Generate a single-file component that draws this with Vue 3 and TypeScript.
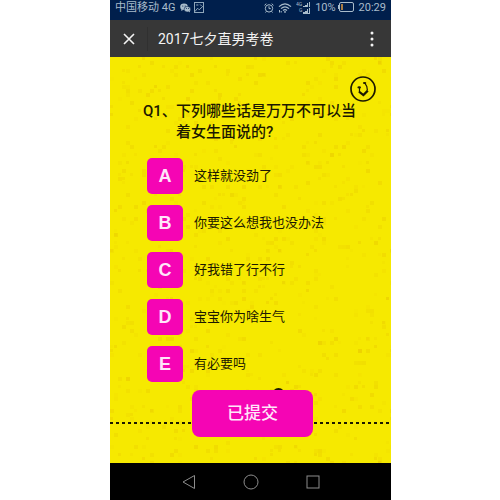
<script setup lang="ts">
import { ref } from 'vue'

interface Option {
  key: string
  text: string
}

interface Speck {
  x: number
  y: number
  size: number
  opacity: number
}

const options: Option[] = [
  { key: 'A', text: '这样就没劲了' },
  { key: 'B', text: '你要这么想我也没办法' },
  { key: 'C', text: '好我错了行不行' },
  { key: 'D', text: '宝宝你为啥生气' },
  { key: 'E', text: '有必要吗' },
]

const selected = ref('')

// Deterministic scatter of faint squares for the paper texture.
function makeSpecks(count: number): Speck[] {
  let seed = 77
  const next = (): number => {
    seed = (seed * 16807) % 2147483647
    return seed / 2147483647
  }
  return Array.from({ length: count }, () => ({
    x: Math.floor(next() * 70) * 4,
    y: Math.floor(next() * 100) * 4,
    size: next() > 0.3 ? 4 : 3,
    opacity: 0.04 + next() * 0.16,
  }))
}

const specks = makeSpecks(750)
</script>

<template>
  <div class="stage">
    <div class="phone">
      <div class="status">
        <span class="carrier">中国移动 4G</span>
        <svg class="wechat" width="11" height="10" viewBox="0 0 11 10" aria-hidden="true">
          <ellipse cx="4" cy="3.8" rx="3.8" ry="3.2" fill="#a9bccb" />
          <path d="M1.5 6 L1.2 8 L3.4 6.8Z" fill="#a9bccb" />
          <ellipse cx="7.4" cy="6.2" rx="3.3" ry="2.8" fill="#a9bccb" stroke="#001f4c" stroke-width=".6" />
          <path d="M8.5 8.3 L10 9.6 L9.8 7.6Z" fill="#a9bccb" />
          <g fill="#001f4c">
            <circle cx="2.8" cy="3" r=".6" /><circle cx="5.2" cy="3" r=".6" />
            <circle cx="6.4" cy="5.6" r=".5" /><circle cx="8.6" cy="5.6" r=".5" />
          </g>
        </svg>
        <svg class="photo" width="10" height="11" viewBox="0 0 10 11" fill="none" stroke="#8fa6ba" aria-hidden="true">
          <rect x=".5" y=".5" width="9" height="10" />
          <path d="M1 9.5 L3.6 6.2 L5.2 7.8 L9 4.2 M2.2 3 H4.4 M6 2.4 L7.6 4" />
        </svg>
        <span class="spacer"></span>
        <svg class="alarm" width="10" height="10" viewBox="0 0 10 10" fill="none" stroke="#a9bccb" aria-hidden="true">
          <circle cx="5" cy="5.4" r="3.7" />
          <path d="M.5 2.3 L2.3 .7 M9.5 2.3 L7.7 .7 M5 3.3 V5.6 H6.8 M2.4 8.4 L1.5 9.5 M7.6 8.4 L8.5 9.5" />
        </svg>
        <svg class="wifi" width="14" height="10" viewBox="0 0 14 10" fill="none" stroke="#a9bccb" stroke-width="1.2" aria-hidden="true">
          <path d="M1 3.6 Q7 -1.8 13 3.6 M3 5.6 Q7 2 11 5.6 M5 7.5 Q7 5.8 9 7.5" />
          <circle cx="7" cy="8.9" r=".9" fill="#a9bccb" stroke="none" />
          <path d="M1.5 7 V9.5 M3.2 8 V9.5" stroke-width="1" />
        </svg>
        <svg class="signal" width="15" height="13" viewBox="0 0 15 13" aria-hidden="true">
          <text x="0" y="5" class="tiny">4G</text>
          <text x="3" y="11" class="tiny">G</text>
          <g fill="#a9bccb">
            <path d="M7 5h2v1H7z M9 4h2v2H9z M11 2h1v4h-1z M13 1h1v5h-1z" />
            <path d="M7 11h2v1H7z M9 10h2v2H9z M11 8h1v4h-1z M13 7h1v5h-1z M7 12h7v1H7z" />
          </g>
        </svg>
        <span class="level">10%</span>
        <svg class="battery" width="17" height="11" viewBox="0 0 17 11" aria-hidden="true">
          <rect x="1.5" y=".5" width="14" height="9" rx="1.5" fill="none" stroke="#a9bccb" />
          <rect x="0" y="3" width="1.5" height="4" fill="#a9bccb" />
          <rect x="3" y="2" width="2" height="6" fill="#a77b42" />
        </svg>
        <span class="clock">20:29</span>
      </div>

      <header class="titlebar">
        <button class="close" type="button" aria-label="关闭">
          <svg width="12" height="12" viewBox="0 0 12 12"><path d="M1 1 L11 11 M11 1 L1 11" stroke="#f4f4f4" stroke-width="1.6" /></svg>
        </button>
        <h1>2017七夕直男考卷</h1>
        <button class="more" type="button" aria-label="更多">
          <svg width="4" height="16" viewBox="0 0 4 16" fill="#f4f4f4">
            <circle cx="2" cy="2" r="1.5" /><circle cx="2" cy="8" r="1.5" /><circle cx="2" cy="14" r="1.5" />
          </svg>
        </button>
      </header>

      <main class="paper">
        <svg class="texture" width="100%" height="100%" aria-hidden="true">
          <defs>
            <pattern id="specks" width="280" height="400" patternUnits="userSpaceOnUse">
              <rect v-for="(s, i) in specks" :key="i" :x="s.x" :y="s.y" :width="s.size" :height="s.size" fill="#dba800" :opacity="s.opacity" />
            </pattern>
          </defs>
          <rect width="100%" height="100%" fill="url(#specks)" />
        </svg>

        <button class="music" type="button" aria-label="音乐">
          <svg width="26" height="26" viewBox="0 0 26 26" fill="none" stroke="#1c1900">
            <circle cx="13" cy="13" r="12" stroke-width="1.7" />
            <path d="M9.6 11.4 L9.4 16 M14.8 7 L16.8 10.4 L17.4 14.4" stroke-width="1.2" />
            <path d="M9 15.6 L13.4 19 L17.8 14.6" stroke-width="2.2" />
            <ellipse cx="9.2" cy="11.4" rx="1.8" ry="1.1" fill="#1c1900" stroke="none" />
            <ellipse cx="14.6" cy="7" rx="1.7" ry="1.1" fill="#1c1900" stroke="none" />
          </svg>
        </button>

        <h2 class="question">
          <span class="number">Q1、</span>
          <span>下列哪些话是万万不可以当<br />着女生面说的?</span>
        </h2>

        <ul class="options">
          <li v-for="option in options" :key="option.key">
            <button class="option" type="button" :aria-pressed="selected === option.key" @click="selected = option.key">
              <span class="badge">{{ option.key }}</span>
              <span>{{ option.text }}</span>
            </button>
          </li>
        </ul>

        <div class="footer">
          <span class="knob"></span>
          <span class="cutline"></span>
          <button class="submit" type="button">已提交</button>
        </div>
      </main>

      <nav class="keys">
        <button type="button" aria-label="返回">
          <svg width="16" height="16" viewBox="0 0 16 16"><path d="M13.5 1.5 V14.5 L2 8Z" /></svg>
        </button>
        <button type="button" aria-label="主页">
          <svg width="16" height="16" viewBox="0 0 16 16"><circle cx="8" cy="8" r="7" /></svg>
        </button>
        <button type="button" aria-label="最近任务">
          <svg width="16" height="16" viewBox="0 0 16 16"><rect x="2" y="2" width="12" height="12" /></svg>
        </button>
      </nav>
    </div>
  </div>
</template>

<style>
body {
  background: #fff;
}
</style>

<style scoped>
.stage {
  display: flex;
  justify-content: center;
  min-height: 100vh;
  padding-left: 1px;
  font-family: Roboto, "Noto Sans CJK SC", sans-serif;
}

button {
  margin: 0;
  padding: 0;
  border: 0;
  background: none;
  color: inherit;
  font: inherit;
  cursor: pointer;
}

svg {
  display: block;
  flex: none;
}

.phone {
  display: flex;
  flex-direction: column;
  width: 100%;
  max-width: 281px;
  background: #000;
}

.status {
  display: flex;
  align-items: center;
  height: 20px;
  padding: 0 5px 5px;
  box-sizing: border-box;
  background: #001f4c;
  color: #a9bccb;
  font-size: 11px;
  line-height: 14px;
  white-space: nowrap;
}

.wechat {
  margin-left: 5px;
}

.photo {
  margin-left: 3px;
}

.spacer {
  flex: 1;
}

.wifi,
.signal,
.level,
.clock {
  margin-left: 4px;
}

.battery {
  margin-left: 2px;
}

.tiny {
  fill: #a9bccb;
  font-size: 5px;
}

.titlebar {
  display: flex;
  align-items: center;
  height: 37px;
  background: #373737;
  color: #f4f4f4;
}

.close {
  display: grid;
  place-items: center;
  width: 38px;
  height: 24px;
  border-right: 1px solid #303030;
}

h1 {
  flex: 1;
  margin: 0;
  padding-left: 10px;
  font-size: 14px;
  font-weight: 400;
  line-height: 20px;
}

.more {
  display: grid;
  place-items: center;
  width: 38px;
  height: 24px;
}

.paper {
  position: relative;
  flex: 1;
  display: flex;
  flex-direction: column;
  background: #f6e900;
  color: #1c1900;
}

.texture {
  position: absolute;
  inset: 0;
}

.music {
  position: absolute;
  top: 19px;
  right: 15px;
}

.question {
  position: relative;
  display: flex;
  margin: 0;
  padding: 44px 16px 0 33px;
  font-size: 15px;
  font-weight: 500;
  line-height: 21px;
  white-space: nowrap;
}

.number {
  flex: none;
  width: 33px;
}

.options {
  position: relative;
  display: flex;
  flex-direction: column;
  gap: 11px;
  margin: 0;
  padding: 15px 16px 0 37px;
  list-style: none;
}

.option {
  display: flex;
  align-items: center;
  gap: 11px;
  width: 100%;
  font-size: 13px;
  line-height: 20px;
  text-align: left;
}

.badge {
  flex: none;
  width: 36px;
  border-radius: 5px;
  background: #f505b4;
  color: #ffe6fa;
  font-family: "Liberation Sans", sans-serif;
  font-size: 18px;
  font-weight: 700;
  line-height: 36px;
  text-align: center;
}

.footer {
  position: relative;
  display: flex;
  justify-content: center;
  padding: 8px 0 26px;
}

.cutline {
  position: absolute;
  top: 40px;
  left: 0;
  right: 0;
  height: 2px;
  background: repeating-linear-gradient(90deg, #1c1900 0 3px, transparent 3px 6px);
}

.knob {
  position: absolute;
  top: 6px;
  left: calc(50% + 21px);
  width: 13px;
  height: 13px;
  border-radius: 50%;
  background: #1c1900;
}

.submit {
  position: relative;
  width: 121px;
  margin-right: -4px;
  border-radius: 8px;
  background: #f505b4;
  color: #ffe6fa;
  font-size: 17px;
  font-weight: 500;
  line-height: 47px;
}

.keys {
  display: flex;
  justify-content: center;
  height: 37px;
}

.keys button {
  display: grid;
  place-items: center;
  width: 62px;
}

.keys svg {
  fill: none;
  stroke: #8c8c8c;
}
</style>
